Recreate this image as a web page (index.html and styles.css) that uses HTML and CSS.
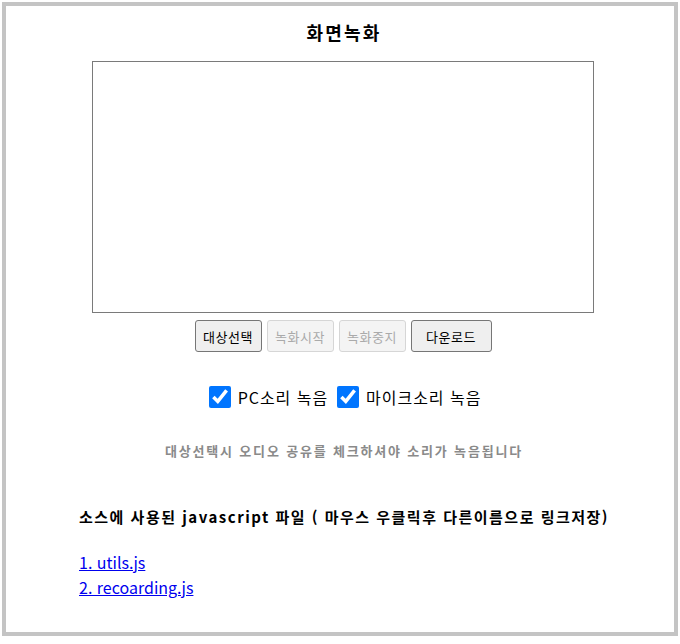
FILE: index.html
```html
<!DOCTYPE html>
<html lang="ko">
<head>
    <meta charset="UTF-8">
    <meta name="viewport" content="width=device-width, initial-scale=1.0">
    <title>화면녹화</title>
    <link rel="stylesheet" href="styles.css">
</head>
<body>

    <div class="wrap">
        <h2 class="title">화면녹화</h2>

        <div class="preview"></div>

        <div class="buttons">
            <button class="btn">대상선택</button>
            <button class="btn" disabled>녹화시작</button>
            <button class="btn" disabled>녹화중지</button>
            <button class="btn btn-wide">다운로드</button>
        </div>

        <div class="options">
            <label class="opt"><input type="checkbox" checked> PC소리 녹음</label>
            <label class="opt"><input type="checkbox" checked> 마이크소리 녹음</label>
        </div>

        <p class="note">대상선택시 오디오 공유를 체크하셔야 소리가 녹음됩니다</p>

        <div class="source">
            <h4 class="source-title">소스에 사용된 javascript 파일 ( 마우스 우클릭후 다른이름으로 링크저장)</h4>
            <a href="#">1. utils.js</a><br>
            <a href="#">2. recoarding.js</a>
        </div>
    </div>

</body>
</html>
```

FILE: styles.css
```css
body {
    margin: 0;
    padding: 2px;
    font-family: "Noto Sans CJK KR", "Noto Sans", sans-serif;
    color: #000;
    background: #fff;
}

.wrap {
    border: 4px solid #c4c4c4;
    height: 626px;
    box-sizing: content-box;
    text-align: center;
}

.title {
    font-size: 18px;
    font-weight: bold;
    margin: 0;
    padding-top: 14px;
    padding-left: 8px;
    line-height: 24px;
    letter-spacing: 0.12em;
}

.preview {
    width: 500px;
    height: 250px;
    border: 1px solid #7a7a7a;
    margin: 17px auto 0;
    position: relative;
    left: 3px;
}

.buttons {
    display: flex;
    justify-content: center;
    gap: 5px;
    margin-top: 7px;
    padding-left: 6px;
}

.btn {
    font-family: inherit;
    font-size: 13px;
    height: 32px;
    width: 67px;
    padding: 0;
    background: #efefef;
    border: 1px solid #767676;
    border-radius: 3px;
    color: #000;
    letter-spacing: 0.04em;
}

.btn:disabled {
    color: #aaa;
    border-color: #d6d6d6;
    background: #f4f4f4;
}

.btn-wide {
    width: 81px;
}

.options {
    display: flex;
    justify-content: center;
    gap: 5px;
    margin-top: 33px;
    padding-left: 6px;
    font-size: 16px;
    line-height: 24px;
    letter-spacing: 0.06em;
}

.opt {
    display: flex;
    align-items: center;
}

.opt input {
    width: 22px;
    height: 22px;
    margin: 0 7px 0 4px;
    accent-color: #0075ff;
}

.note {
    font-size: 13px;
    font-weight: bold;
    color: #8a8a8a;
    margin: 32px 0 0;
    padding-left: 8px;
    line-height: 20px;
    letter-spacing: 0.14em;
}

.source {
    text-align: left;
    padding-left: 73px;
    margin-top: 45px;
    font-size: 16px;
    line-height: 25px;
}

.source-title {
    font-size: 15px;
    font-weight: bold;
    margin: 0 0 22px;
    line-height: 22px;
    letter-spacing: 0.1em;
}

.source a {
    color: #0000ee;
}
```
